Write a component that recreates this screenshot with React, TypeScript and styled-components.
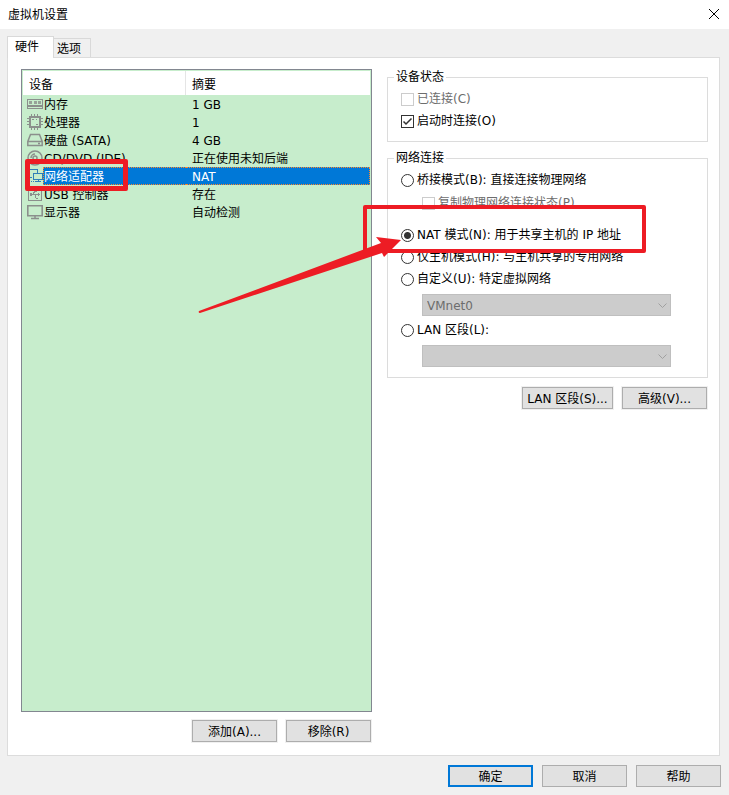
import React from "react";
import styled, { createGlobalStyle, css } from "styled-components";

const GlobalStyle = createGlobalStyle`
  *, *::before, *::after { box-sizing: border-box; }
  body {
    margin: 0;
    background: #f0f0f0;
    color: #000;
    font: 12px/16px "DejaVu Sans", "Noto Sans CJK SC", sans-serif;
  }
  button, select, input { font: inherit; color: inherit; margin: 0; }
`;

const Window = styled.main`
  min-height: 100vh;
  display: flex;
  flex-direction: column;
  background: #f0f0f0;
`;

const TitleBar = styled.header`
  height: 29px;
  padding: 0 9px 0 8px;
  display: flex;
  align-items: center;
  justify-content: space-between;
  background: #fff;
`;

const Title = styled.h1`
  margin: 0;
  font-size: 12px;
  line-height: 16px;
  font-weight: 400;
`;

const CloseButton = styled.button`
  display: flex;
  padding: 0 1px 2px;
  border: 0;
  background: none;
`;

const TabList = styled.div`
  display: flex;
  align-items: flex-end;
  padding: 7px 7px 0;
`;

const Tab = styled.button<{ $active?: boolean }>`
  position: relative;
  height: 19px;
  padding: 1px 9px 0 3px;
  border: 1px solid #d9d9d9;
  border-width: 1px 1px 0 0;
  background: #f0f0f0;
  line-height: 18px;
  ${(p) =>
    p.$active &&
    css`
      z-index: 1;
      height: 22px;
      margin-bottom: -1px;
      padding: 0 14px 1px 7px;
      border-left-width: 1px;
      background: #fff;
    `}
`;

const TabPanel = styled.section`
  flex: 1;
  display: grid;
  grid-template-columns: 351fr 321fr;
  gap: 15px;
  margin: 0 9px 0 7px;
  padding: 11px 11px 13px 13px;
  border: 1px solid #dcdcdc;
  background: #fff;
`;

const Column = styled.div`
  display: flex;
  flex-direction: column;
  min-width: 0;
`;

const DeviceList = styled.div`
  flex: 1;
  padding: 1px;
  border: 1px solid #828790;
  background: #c7edcc;
`;

const DeviceTable = styled.table`
  width: 100%;
  table-layout: fixed;
  border-collapse: separate;
  border-spacing: 0;
`;

const HeadCell = styled.th`
  height: 24px;
  padding: 3px 6px 0;
  background: #fff;
  text-align: left;
  font-weight: 400;
  &:first-child {
    width: 47%;
    border-right: 1px solid #e5e5e5;
  }
`;

const selectedFill = css`
  background: #0078d7;
  color: #fff;
  border: 1px dotted #ff8728;
`;

const NameCell = styled.td`
  position: relative;
  height: 18px;
  padding: 0 0 0 4px;
`;

const NameContent = styled.div`
  display: flex;
  align-items: center;
  height: 18px;
`;

const DeviceName = styled.span<{ $selected?: boolean }>`
  flex: 1;
  height: 18px;
  border: 1px solid transparent;
  line-height: 18px;
  white-space: nowrap;
  ${(p) => p.$selected && selectedFill}
  border-right: 0;
`;

const SummaryCell = styled.td<{ $selected?: boolean }>`
  height: 18px;
  padding: 0 6px;
  border: 1px solid transparent;
  ${(p) => p.$selected && selectedFill}
  border-left: 0;
`;

const SummaryText = styled.div`
  height: 16px;
  line-height: 18px;
`;

const ButtonRow = styled.div<{ $top: number }>`
  display: flex;
  justify-content: flex-end;
  gap: 9px;
  margin-top: ${(p) => p.$top}px;
  padding-right: 1px;
`;

const Footer = styled.footer`
  display: flex;
  justify-content: flex-end;
  gap: 9px;
  padding: 9px 8px 8px;
`;

const PushButton = styled.button<{ $primary?: boolean; $halo?: boolean; $wide?: boolean }>`
  min-width: ${(p) => (p.$wide ? 91 : 85)}px;
  height: 22px;
  padding: 1px 4px 0;
  border: ${(p) => (p.$primary ? "2px solid #0078d7" : "1px solid #adadad")};
  background: #e1e1e1;
  box-shadow: ${(p) => (p.$halo ? "0 0 0 1px #f0f0f0" : "none")};
  line-height: 16px;
  white-space: nowrap;
`;

const Group = styled.fieldset<{ $bottom: number }>`
  display: block;
  min-width: 0;
  margin: 0 0 8px;
  padding: 3px 36px ${(p) => p.$bottom}px 13px;
  border: 1px solid #dcdcdc;
`;

const Legend = styled.legend`
  margin-left: -7px;
  padding: 0 2px;
  line-height: 16px;
`;

const OptionRow = styled.div<{ $indent?: boolean; $after?: number }>`
  position: relative;
  display: flex;
  align-items: center;
  height: 22px;
  margin-left: ${(p) => (p.$indent ? 21 : 0)}px;
  margin-bottom: ${(p) => p.$after ?? 0}px;
`;

const OptionLabel = styled.label<{ $disabled?: boolean }>`
  display: flex;
  align-items: center;
  gap: 3px;
  line-height: 17px;
  white-space: nowrap;
  color: ${(p) => (p.$disabled ? "#6d6d6d" : "#000")};
`;

const CheckHolder = styled.span`
  display: grid;
  & > * {
    grid-area: 1 / 1;
  }
  svg {
    pointer-events: none;
  }
`;

const CheckInput = styled.input`
  appearance: none;
  width: 13px;
  height: 13px;
  border: 1px solid #333;
  background: #fff;
  &:disabled {
    border-color: #ccc;
  }
  & + svg {
    visibility: hidden;
  }
  &:checked + svg {
    visibility: visible;
  }
`;

const RadioInput = styled.input`
  appearance: none;
  width: 13px;
  height: 13px;
  border: 1px solid #333;
  border-radius: 50%;
  background: #fff;
  &:checked {
    background: radial-gradient(circle, #333 3px, #fff 4px);
  }
`;

const SelectHolder = styled.div<{ $after?: number }>`
  position: relative;
  margin: 0 0 ${(p) => p.$after ?? 0}px 21px;
  svg {
    position: absolute;
    right: 4px;
    top: 9px;
    pointer-events: none;
  }
`;

const Select = styled.select`
  display: block;
  appearance: none;
  width: 100%;
  height: 22px;
  padding: 1px 20px 0 4px;
  border: 1px solid #bfbfbf;
  border-radius: 0;
  background: #ccc;
  &:disabled {
    color: #6d6d6d;
    opacity: 1;
  }
`;

const DeviceHighlight = styled.span`
  position: absolute;
  z-index: 2;
  left: 2px;
  top: -8px;
  width: 103px;
  height: 32px;
  border: 5px solid #ed1c24;
  border-radius: 2px;
  pointer-events: none;
`;

const OptionHighlight = styled.span`
  position: absolute;
  z-index: 2;
  left: -38px;
  top: -19px;
  width: 283px;
  height: 48px;
  border: 4px solid #ed1c24;
  border-radius: 2px;
  pointer-events: none;
`;

const Arrow = styled.svg`
  position: absolute;
  z-index: 3;
  left: -203px;
  top: 13px;
  pointer-events: none;
`;

type IconKind = "memory" | "cpu" | "disk" | "cd" | "net" | "usb" | "display";

const iconShapes: Record<IconKind, React.ReactNode> = {
  memory: (
    <>
      <path d="M.5 3.500h15v6H.5zM.5 12.500h15M.5 9v4M15.500 9v4M1 10.500h14" />
      <path d="M2 6.500h3M6.500 6.500h3M11 6.500h3" strokeWidth="3" strokeOpacity=".8" />
    </>
  ),
  cpu: (
    <>
      <path d="M3 3h10v10H3z" strokeWidth="2" />
      <path d="M4.500 0v2M7.500 0v2M10.500 0v2M4.500 14v2M7.500 14v2M10.500 14v2M0 4.500h2M0 7.500h2M0 10.500h2M14 4.500h2M14 7.500h2M14 10.500h2M5 5.500h2M9 5.500h1M9 10.500h2" />
    </>
  ),
  disk: (
    <g shapeRendering="auto" strokeWidth="1.500">
      <path d="M3.500 2.500h9l2.700 7v4H.8v-4zM1 9.500h14M11 11.500h2" />
    </g>
  ),
  cd: (
    <g shapeRendering="auto" strokeWidth="1.500">
      <circle cx="8" cy="8" r="7" />
      <circle cx="8" cy="8" r="2" />
      <path d="M4 8a4 4 0 0 1 4-4" />
    </g>
  ),
  net: (
    <>
      <path d="M5 9.500H2.500v-8h8V5M6.500 5.500h9v6h-9zM11 12v2M8 13.500h6" stroke="#2f7fb8" />
      <path d="M2 13.500h7" stroke="#2f7fb8" strokeDasharray="1 1" />
    </>
  ),
  usb: (
    <>
      <rect x="1.500" y="1.500" width="13" height="13" rx="1" />
      <path d="M4 8.500h9M11 7v3M6 8l2-3h2M8 9l1 3h2" />
      <path d="M3 8.500h2" strokeWidth="3" />
    </>
  ),
  display: (
    <g shapeRendering="auto">
      <path d="M.8 1.800h14.400v10H.8z" strokeWidth="1.600" />
      <path d="M8 12v2M4 14.500h8" strokeWidth="1.500" />
    </g>
  ),
};

function DeviceIcon({ kind }: { kind: IconKind }) {
  return (
    <svg width="16" height="16" viewBox="0 0 16 16" fill="none" stroke="#8b8f8c" shapeRendering="crispEdges" aria-hidden="true">
      {iconShapes[kind]}
    </svg>
  );
}

function Chevron() {
  return (
    <svg width="9" height="6" viewBox="0 0 9 6" fill="none" stroke="#a0a0a0" aria-hidden="true">
      <path d="M.5 .5l4 4 4-4" />
    </svg>
  );
}

interface Device {
  icon: IconKind;
  name: string;
  summary: string;
  selected?: boolean;
}

const devices: Device[] = [
  { icon: "memory", name: "内存", summary: "1 GB" },
  { icon: "cpu", name: "处理器", summary: "1" },
  { icon: "disk", name: "硬盘 (SATA)", summary: "4 GB" },
  { icon: "cd", name: "CD/DVD (IDE)", summary: "正在使用未知后端" },
  { icon: "net", name: "网络适配器", summary: "NAT", selected: true },
  { icon: "usb", name: "USB 控制器", summary: "存在" },
  { icon: "display", name: "显示器", summary: "自动检测" },
];

function Check({ label, disabled, checked }: { label: string; disabled?: boolean; checked?: boolean }) {
  return (
    <OptionLabel $disabled={disabled}>
      <CheckHolder>
        <CheckInput type="checkbox" disabled={disabled} defaultChecked={checked} />
        <svg width="13" height="13" viewBox="0 0 13 13" fill="none" stroke="#333" strokeWidth="1.500" aria-hidden="true">
          <path d="M2.500 6.500l2.500 2.500 5.500-5.500" />
        </svg>
      </CheckHolder>
      {label}
    </OptionLabel>
  );
}

function Radio({ label, checked }: { label: string; checked?: boolean }) {
  return (
    <OptionLabel>
      <RadioInput type="radio" name="network" defaultChecked={checked} />
      {label}
    </OptionLabel>
  );
}

export default function App() {
  return (
    <>
      <GlobalStyle />
      <Window>
        <TitleBar>
          <Title>虚拟机设置</Title>
          <CloseButton aria-label="关闭">
            <svg width="10" height="10" viewBox="0 0 10 10" stroke="#000" aria-hidden="true">
              <path d="M0 0l10 10M10 0L0 10" />
            </svg>
          </CloseButton>
        </TitleBar>

        <TabList role="tablist">
          <Tab role="tab" aria-selected="true" $active>硬件</Tab>
          <Tab role="tab" aria-selected="false">选项</Tab>
        </TabList>

        <TabPanel role="tabpanel">
          <Column>
            <DeviceList>
              <DeviceTable>
                <thead>
                  <tr>
                    <HeadCell>设备</HeadCell>
                    <HeadCell>摘要</HeadCell>
                  </tr>
                </thead>
                <tbody>
                  {devices.map((d) => (
                    <tr key={d.name}>
                      <NameCell>
                        <NameContent>
                          <DeviceIcon kind={d.icon} />
                          <DeviceName $selected={d.selected}>{d.name}</DeviceName>
                        </NameContent>
                        {d.selected && <DeviceHighlight />}
                      </NameCell>
                      <SummaryCell $selected={d.selected}>
                        <SummaryText>{d.summary}</SummaryText>
                      </SummaryCell>
                    </tr>
                  ))}
                </tbody>
              </DeviceTable>
            </DeviceList>
            <ButtonRow $top={8}>
              <PushButton $halo>添加(A)...</PushButton>
              <PushButton $halo>移除(R)</PushButton>
            </ButtonRow>
          </Column>

          <Column>
            <Group $bottom={9}>
              <Legend>设备状态</Legend>
              <OptionRow><Check label="已连接(C)" disabled /></OptionRow>
              <OptionRow><Check label="启动时连接(O)" checked /></OptionRow>
            </Group>

            <Group $bottom={10}>
              <Legend>网络连接</Legend>
              <OptionRow $after={1}><Radio label="桥接模式(B): 直接连接物理网络" /></OptionRow>
              <OptionRow $indent $after={10}><Check label="复制物理网络连接状态(P)" disabled /></OptionRow>
              <OptionRow>
                <Radio label="NAT 模式(N): 用于共享主机的 IP 地址" checked />
                <OptionHighlight />
                <Arrow width="204" height="78" viewBox="0 0 204 78" fill="#ed1c24" aria-hidden="true">
                  <path d="M1 74L183 6L178 0L203 3L186 20L184 16L2 76Q0 76 1 74Z" />
                </Arrow>
              </OptionRow>
              <OptionRow><Radio label="仅主机模式(H): 与主机共享的专用网络" /></OptionRow>
              <OptionRow $after={4}><Radio label="自定义(U): 特定虚拟网络" /></OptionRow>
              <SelectHolder $after={3}>
                <Select disabled aria-label="特定虚拟网络" defaultValue="VMnet0">
                  <option>VMnet0</option>
                </Select>
                <Chevron />
              </SelectHolder>
              <OptionRow $after={4}><Radio label="LAN 区段(L):" /></OptionRow>
              <SelectHolder>
                <Select disabled aria-label="LAN 区段">
                  <option></option>
                </Select>
                <Chevron />
              </SelectHolder>
            </Group>

            <ButtonRow $top={1}>
              <PushButton $halo $wide>LAN 区段(S)...</PushButton>
              <PushButton $halo>高级(V)...</PushButton>
            </ButtonRow>
          </Column>
        </TabPanel>

        <Footer>
          <PushButton $primary>确定</PushButton>
          <PushButton>取消</PushButton>
          <PushButton>帮助</PushButton>
        </Footer>
      </Window>
    </>
  );
}
